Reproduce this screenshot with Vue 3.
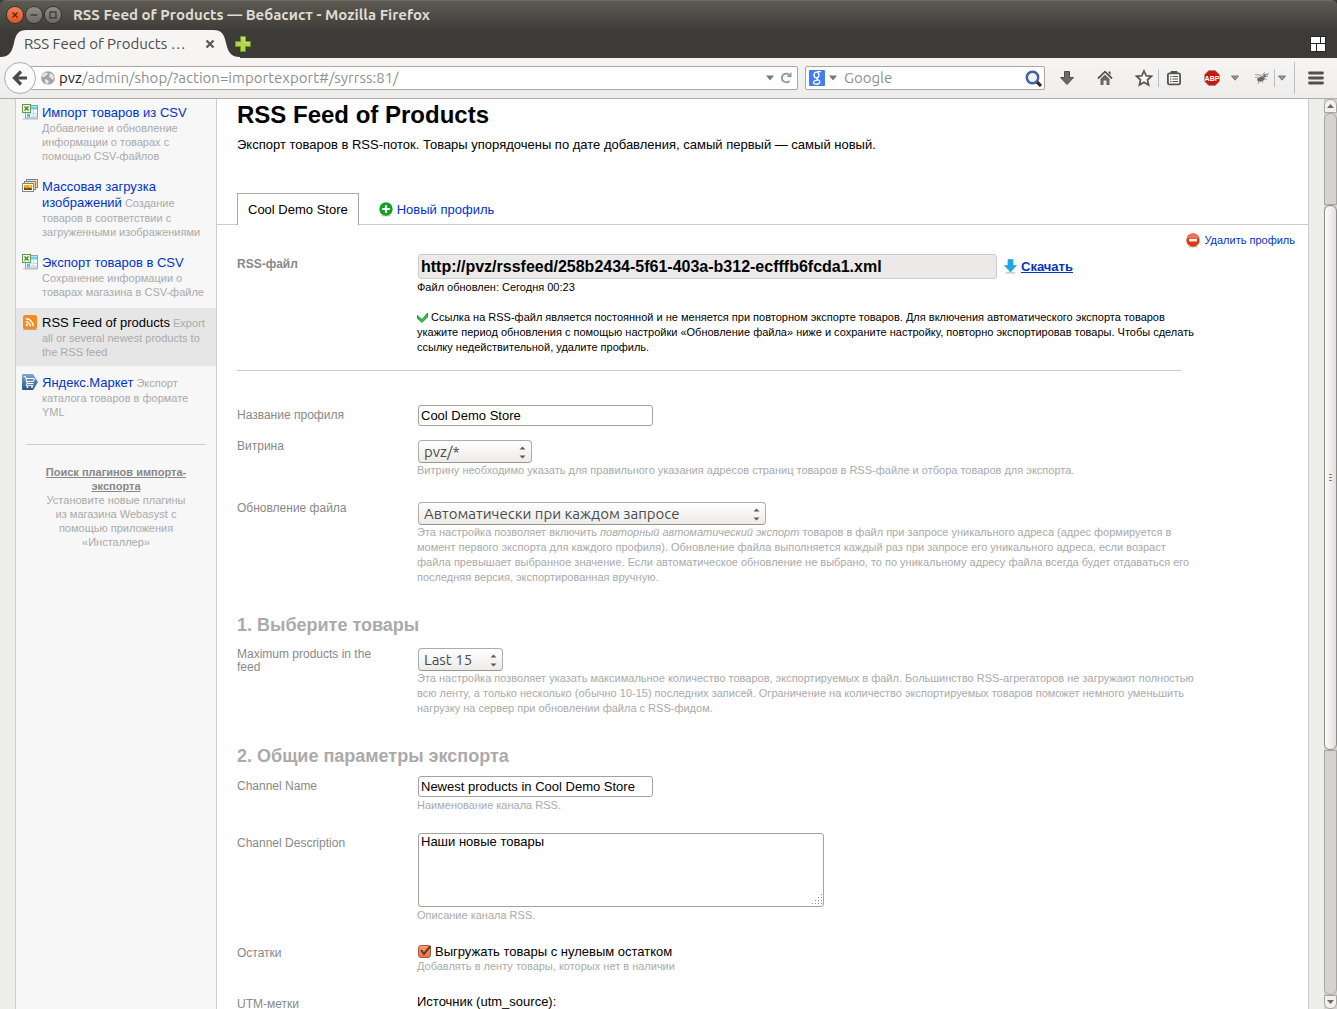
<script setup>
import { ref } from 'vue'

const plugins = [
  { icon: 'csv', title: 'Импорт товаров из CSV', hint: 'Добавление и обновление информации о товарах с помощью CSV-файлов' },
  { icon: 'images', title: 'Массовая загрузка изображений', hint: 'Создание товаров в соответствии с загруженными изображениями' },
  { icon: 'csv', title: 'Экспорт товаров в CSV', hint: 'Сохранение информации о товарах магазина в CSV-файле' },
  { icon: 'rss', title: 'RSS Feed of products', hint: 'Export all or several newest products to the RSS feed', selected: true },
  { icon: 'cart', title: 'Яндекс.Маркет', hint: 'Экспорт каталога товаров в формате YML' },
]

const address = ref('')
const search = ref('')
const feedUrl = ref('http://pvz/rssfeed/258b2434-5f61-403a-b312-ecfffb6fcda1.xml')
const profileName = ref('Cool Demo Store')
const channelName = ref('Newest products in Cool Demo Store')
const channelDescription = ref('Наши новые товары')
const exportZeroStock = ref(true)
</script>

<template>
  <div class="window">
    <header class="titlebar">
      <button class="win-btn close" aria-label="Close">
        <svg width="16" height="16" viewBox="0 0 16 16"><path d="M5.500 5.500l5 5M10.500 5.500l-5 5" stroke="#5a2413" stroke-width="1.400" /></svg>
      </button>
      <button class="win-btn" aria-label="Minimize">
        <svg width="16" height="16" viewBox="0 0 16 16"><path d="M4.500 8h7" stroke="#393834" stroke-width="1.400" /></svg>
      </button>
      <button class="win-btn" aria-label="Maximize">
        <svg width="16" height="16" viewBox="0 0 16 16"><rect x="5" y="5" width="6" height="6" fill="none" stroke="#393834" stroke-width="1.300" /></svg>
      </button>
      <span class="win-title">RSS Feed of Products — Вебасист - Mozilla Firefox</span>
    </header>

    <div class="tabstrip">
      <div class="browser-tab">
        <svg class="tab-shape" width="240" height="29" viewBox="0 0 240 29">
          <path d="M0 29V28C10 28 12 22 14 14C16 5 18 1 27 1H213C222 1 224 5 226 14C228 22 230 28 240 28V29Z" fill="#f6f5f4" />
        </svg>
        <span class="tab-text">RSS Feed of Products …</span>
        <button class="bare tab-close" aria-label="Close tab">
          <svg width="10" height="10" viewBox="0 0 10 10"><path d="M1.500 1.500l7 7M8.500 1.500l-7 7" stroke="#5b5b58" stroke-width="2.400" /></svg>
        </button>
      </div>
      <button class="bare tab-new" aria-label="New tab">
        <svg width="16" height="16" viewBox="0 0 16 16"><path d="M5.500.5h5v5h5v5h-5v5h-5v-5h-5v-5h5z" fill="#b2d64a" stroke="#6f9a22" /><path d="M6.500 2h3v4.500H14" fill="none" stroke="#d8ee8e" /></svg>
      </button>
      <button class="bare tab-groups" aria-label="Tab groups">
        <svg width="16" height="16" viewBox="0 0 16 16" fill="#fff"><rect width="16" height="16" rx="1" fill="#24262b" /><path d="M1 1h9v6H1zM11 1h4v6h-4zM1 8h5v7H1zM7 8h8v7H7z" /></svg>
      </button>
    </div>

    <div class="toolbar">
      <button class="back" aria-label="Back">
        <svg width="16" height="16" viewBox="0 0 16 16"><path d="M9 1.500L2.500 8L9 14.500M3 8H15" fill="none" stroke="#4a4a48" stroke-width="3.200" /></svg>
      </button>
      <div class="urlbar">
        <svg width="14" height="14" viewBox="0 0 14 14"><circle cx="7" cy="7" r="6.800" fill="#a3a3a3" /><path d="M2 3l3-1.500 2 1-1.500 2L3 6 1 6zM9 2l3 2 1 3-2 2-1-2-2-1zM4 8l3 1 1 2-2 2.500L4 11z" fill="#e6e6e6" /></svg>
        <label class="url-text"><b>pvz</b>/admin/shop/?action=importexport#/syrrss:81/<input v-model="address" class="url-input" aria-label="Address"></label>
        <svg width="8" height="6" viewBox="0 0 8 6"><path d="M0 .5h8L4 5.500z" fill="#787878" /></svg>
        <button class="bare" aria-label="Reload">
          <svg width="12" height="12" viewBox="0 0 12 12"><path d="M9.300 9A4.300 4.300 0 1 1 9 2.700" fill="none" stroke="#8c9aa1" stroke-width="2" /><path d="M6.500 5H11.500V0z" fill="#8c9aa1" /></svg>
        </button>
      </div>
      <div class="searchbar">
        <svg width="16" height="16" viewBox="0 0 16 16"><rect width="16" height="16" rx="1" fill="#437cf3" /><ellipse cx="7.500" cy="5" rx="2.400" ry="2.900" fill="none" stroke="#fff" stroke-width="1.400" /><path d="M8 1.700H12M8.500 7.800C6 9 10.800 9.500 10.800 12C10.800 14.800 4.500 15 4.500 12.500C4.500 10.500 7 10 9 10.200" fill="none" stroke="#fff" stroke-width="1.300" /></svg>
        <svg width="8" height="6" viewBox="0 0 8 6"><path d="M0 .5h8L4 5.500z" fill="#787878" /></svg>
        <input v-model="search" class="search-input" placeholder="Google" aria-label="Search">
        <button class="bare" aria-label="Go">
          <svg width="17" height="17" viewBox="0 0 17 17"><path d="M11 11L16 16" stroke="#2f2f2f" stroke-width="3.200" /><circle cx="7.500" cy="7.500" r="5.700" fill="#eef2fb" stroke="#2c4a8e" stroke-width="2.400" /><circle cx="7.500" cy="7.500" r="5.700" fill="none" stroke="#7d9bd6" stroke-width=".6" /></svg>
        </button>
      </div>
      <nav class="tools">
        <button class="bare" aria-label="Downloads">
          <svg width="16" height="16" viewBox="0 0 16 16"><path d="M5.500 1.500h5v6h4L8 14.500 1.500 7.500h4z" fill="#6a6a68" stroke="#4c4c4a" /></svg>
        </button>
        <button class="bare" aria-label="Home">
          <svg width="16" height="16" viewBox="0 0 16 16"><path d="M1 8.500L8 1.700L15 8.500" fill="none" stroke="#545452" stroke-width="1.800" /><path d="M3.500 9L8 4.500L12.500 9V15H9.500V10.500H6.500V15H3.500z" fill="#666664" /><path d="M11.500 1.500h2V5l-2-2z" fill="#545452" /></svg>
        </button>
        <button class="bare" aria-label="Bookmark">
          <svg width="18" height="18" viewBox="0 0 18 18"><path d="M9 2L11.200 6.800L16.300 7.300L12.500 10.800L13.600 16L9 13.300L4.400 16L5.500 10.800L1.700 7.300L6.800 6.800Z" fill="#fafafa" stroke="#545452" stroke-width="1.700" /></svg>
        </button>
        <i class="sep" />
        <button class="bare" aria-label="Bookmarks list">
          <svg width="16" height="16" viewBox="0 0 16 16"><path d="M5 3V1.500h6V3" fill="#545452" stroke="#545452" /><rect x="1.900" y="3.400" width="12.200" height="11" rx="1.500" fill="#fafafa" stroke="#545452" stroke-width="1.800" /><path d="M4 6.500h1.500M6.500 6.500H12M4 9h1.500M6.500 9H12M4 11.500h1.500M6.500 11.500H12" stroke="#545452" stroke-width="1.200" /></svg>
        </button>
        <button class="bare abp" aria-label="ABP">
          <svg width="16" height="16" viewBox="0 0 16 16"><path d="M4.800.5h6.400l4.300 4.300v6.400l-4.300 4.300H4.800L.5 11.200V4.800z" fill="#c9190b" stroke="#8d8d8d" stroke-width=".7" /><text x="8" y="10.800" text-anchor="middle" font-size="7" font-weight="700" fill="#fff">ABP</text></svg>
        </button>
        <svg class="caret" width="8" height="6" viewBox="0 0 8 6"><path d="M.5 1h7L4 5.200z" fill="#999" stroke="#777" /></svg>
        <button class="bare bug" aria-label="Firebug">
          <svg width="16" height="14" viewBox="0 0 16 14"><ellipse cx="7" cy="8" rx="4" ry="2.300" fill="#6a6a6a" transform="rotate(-20 7 8)" /><ellipse cx="11.500" cy="4.500" rx="2.500" ry="1.700" fill="#777" /><path d="M5 4L1 3.500M4 6L1 6.500M5 10L4 13M8 10l1 2M10 7l3 2M7 5l4-4M13 3l2-1M8 5L4 3.500" stroke="#999" stroke-width=".9" fill="none" /><circle cx="12.500" cy="4.500" r=".8" fill="#e8e8e8" /></svg>
        </button>
        <i class="sep" />
        <svg class="caret near" width="8" height="6" viewBox="0 0 8 6"><path d="M.5 1h7L4 5.200z" fill="#999" stroke="#777" /></svg>
        <i class="sep tall" />
        <button class="bare" aria-label="Menu">
          <svg width="16" height="14" viewBox="0 0 16 14"><path d="M1.500 2h13M1.500 7h13M1.500 12h13" stroke="#50504e" stroke-width="2.800" stroke-linecap="round" /></svg>
        </button>
      </nav>
    </div>

    <div class="viewport">
      <div class="page">
        <aside class="sidebar">
          <ul>
            <li v-for="p in plugins" :key="p.title" :class="{ selected: p.selected }">
              <svg v-if="p.icon === 'csv'" width="16" height="16" viewBox="0 0 16 16">
                <rect x="3.500" y="1.500" width="12" height="12.500" fill="#f4fafc" stroke="#8aa9b5" /><path d="M9 4h6" stroke="#6fcdf0" stroke-width="3" /><path d="M5 9.500h10M5 12h10M11.500 6v8" stroke="#c3dde5" /><path d="M5 10h3v3H5z" fill="#53c3ea" /><rect x=".5" y=".5" width="8" height="8" fill="#eef6e6" stroke="#5f9a48" /><path d="M2.500 2.500l4 4M6.500 2.500l-4 4" stroke="#4c8a34" stroke-width="1.500" /><path d="M1 15h15" stroke="#b9b9b9" />
              </svg>
              <svg v-else-if="p.icon === 'images'" width="16" height="16" viewBox="0 0 16 16">
                <rect x="4.500" y="1.500" width="11" height="8" fill="#fff" stroke="#789" /><path d="M6 3h8v5" fill="none" stroke="#e8b53a" stroke-width="1.200" /><rect x="2.500" y="3.500" width="11" height="8" fill="#fff" stroke="#789" /><path d="M4 5h8v5" fill="none" stroke="#e8b53a" stroke-width="1.200" /><rect x=".5" y="5.500" width="11" height="8" fill="#fff" stroke="#789" /><path d="M2 7h8v5H2z" fill="#f6a90b" /><path d="M2 9.500l3 .8 2-.8 3 1V12H2z" fill="#744a10" /><circle cx="8" cy="8.500" r="1" fill="#ffeb7a" />
              </svg>
              <svg v-else-if="p.icon === 'rss'" width="16" height="16" viewBox="0 0 16 16">
                <path d="M1 15.500h14" stroke="#aaa" /><rect x="1" y="1" width="14" height="14" rx="2" fill="#f8891b" /><circle cx="4.900" cy="11" r="1.200" fill="#fff" /><path d="M3.800 7.700a4.500 4.500 0 0 1 4.500 4.500M3.800 4.800a7.400 7.400 0 0 1 7.400 7.400" fill="none" stroke="#fff" stroke-width="1.600" />
              </svg>
              <svg v-else width="16" height="16" viewBox="0 0 16 16">
                <defs><linearGradient id="cart-bg" x2="0" y2="1"><stop stop-color="#7fa7cf" /><stop offset="1" stop-color="#2c5488" /></linearGradient></defs>
                <path d="M1 0h10l5 8-5 8H1a1 1 0 0 1-1-1V1a1 1 0 0 1 1-1z" fill="url(#cart-bg)" /><path d="M1.500 2.500h2L5 9.500h6.500M4 4.500h8.500l-1 3H5M5 9.500l-1 1.800h7.500" fill="none" stroke="#fff" /><circle cx="5.500" cy="13" r="1" fill="#fff" /><circle cx="10" cy="13" r="1" fill="#fff" />
              </svg>
              <p><a href="#">{{ p.title }}</a> <span class="hint">{{ p.hint }}</span></p>
            </li>
          </ul>
          <hr>
          <p class="more"><a href="#">Поиск плагинов импорта-экспорта</a><br>Установите новые плагины из магазина Webasyst с помощью приложения «Инсталлер»</p>
        </aside>

        <main class="content">
          <h1>RSS Feed of Products</h1>
          <p class="lead">Экспорт товаров в RSS-поток. Товары упорядочены по дате добавления, самый первый — самый новый.</p>

          <nav class="tabs">
            <a href="#" class="tab">Cool Demo Store</a>
            <a href="#" class="new-profile">
              <svg width="14" height="15" viewBox="0 0 14 15"><ellipse cx="7" cy="13.500" rx="5" ry="1" fill="#ccc" /><circle cx="7" cy="7" r="6.700" fill="#12a123" /><path d="M7 3.200v7.600M3.200 7h7.600" stroke="#fff" stroke-width="2.200" /></svg>
              Новый профиль
            </a>
          </nav>

          <div class="delete-line">
            <a href="#" class="delete">
              <svg width="14" height="15" viewBox="0 0 14 15"><ellipse cx="7" cy="13.500" rx="5" ry="1" fill="#ccc" /><circle cx="7" cy="7" r="6.700" fill="#de3a12" /><path d="M1 5.500a6.200 6.200 0 0 1 12 0z" fill="#f0745a" /><path d="M3 7.200h8" stroke="#fff" stroke-width="2.400" /></svg>
              Удалить профиль
            </a>
          </div>

          <form class="form" @submit.prevent>
            <div class="row first">
              <label for="feed" class="low strong">RSS-файл</label>
              <div class="value">
                <div class="feed-line">
                  <input id="feed" v-model="feedUrl" class="feed" readonly>
                  <a href="#" class="download">
                    <svg width="13" height="15" viewBox="0 0 13 15"><ellipse cx="6.500" cy="13.800" rx="5" ry="1" fill="#ccc" /><path d="M4 .5h5v6h3.500L6.500 13 .5 6.500H4z" fill="#1fa8e8" stroke="#3b9bd0" stroke-width=".7" /></svg>
                    <span>Скачать</span>
                  </a>
                </div>
                <p class="note">Файл обновлен: Сегодня 00:23</p>
                <p class="note permanent">
                  <svg width="11" height="11" viewBox="0 0 11 11"><path d="M.5 3.500L5 7.500L10.500 1V5L5 10.500L.5 6.500z" fill="#3fbf4f" stroke="#1a7d2b" stroke-width=".8" /></svg>
                  Ссылка на RSS-файл является постоянной и не меняется при повторном экспорте товаров. Для включения автоматического экспорта товаров укажите период обновления с помощью настройки «Обновление файла» ниже и сохраните настройку, повторно экспортировав товары. Чтобы сделать ссылку недействительной, удалите профиль.
                </p>
              </div>
            </div>
            <hr>

            <div class="row">
              <label for="name" class="low">Название профиля</label>
              <div class="value"><input id="name" v-model="profileName" class="text"></div>
            </div>
            <div class="row close-row">
              <label for="storefront">Витрина</label>
              <div class="value">
                <span class="select w-small"><select id="storefront"><option>pvz/*</option></select><svg width="7" height="13" viewBox="0 0 7 13"><path d="M.5 3.500L3.500 .5 6.500 3.500zM.5 9.500h6L3.500 12.500z" fill="#5b5b58" /></svg></span>
                <p class="hint">Витрину необходимо указать для правильного указания адресов страниц товаров в RSS-файле и отбора товаров для экспорта.</p>
              </div>
            </div>
            <div class="row wide-gap">
              <label for="update">Обновление файла</label>
              <div class="value">
                <span class="select w-large"><select id="update"><option>Автоматически при каждом запросе</option></select><svg width="7" height="13" viewBox="0 0 7 13"><path d="M.5 3.500L3.500 .5 6.500 3.500zM.5 9.500h6L3.500 12.500z" fill="#5b5b58" /></svg></span>
                <p class="hint">Эта настройка позволяет включить <i>повторный автоматический экспорт</i> товаров в файл при запросе уникального адреса (адрес формируется в момент первого экспорта для каждого профиля). Обновление файла выполняется каждый раз при запросе его уникального адреса, если возраст файла превышает выбранное значение. Если автоматическое обновление не выбрано, то по уникальному адресу файла всегда будет отдаваться его последняя версия, экспортированная вручную.</p>
              </div>
            </div>

            <h2>1. Выберите товары</h2>
            <div class="row close-row">
              <label for="max">Maximum products in the feed</label>
              <div class="value">
                <span class="select w-tiny"><select id="max"><option>Last 15</option></select><svg width="7" height="13" viewBox="0 0 7 13"><path d="M.5 3.500L3.500 .5 6.500 3.500zM.5 9.500h6L3.500 12.500z" fill="#5b5b58" /></svg></span>
                <p class="hint">Эта настройка позволяет указать максимальное количество товаров, экспортируемых в файл. Большинство RSS-агрегаторов не загружают полностью всю ленту, а только несколько (обычно 10-15) последних записей. Ограничение на количество экспортируемых товаров поможет немного уменьшить нагрузку на сервер при обновлении файла с RSS-фидом.</p>
              </div>
            </div>

            <h2>2. Общие параметры экспорта</h2>
            <div class="row tight-row">
              <label for="channel" class="low">Channel Name</label>
              <div class="value">
                <input id="channel" v-model="channelName" class="text">
                <p class="hint">Наименование канала RSS.</p>
              </div>
            </div>
            <div class="row gap">
              <label for="description" class="low">Channel Description</label>
              <div class="value">
                <span class="area">
                  <textarea id="description" v-model="channelDescription" />
                  <svg width="11" height="11" viewBox="0 0 11 11"><path d="M9 .5h1M6 3.500h1M9 3.500h1M3 6.500h1M6 6.500h1M9 6.500h1M0 9.500h1M3 9.500h1M6 9.500h1M9 9.500h1" stroke="#8f8f8b" /></svg>
                </span>
                <p class="hint">Описание канала RSS.</p>
              </div>
            </div>
            <div class="row gap">
              <span class="label low">Остатки</span>
              <div class="value">
                <label class="check">
                  <input v-model="exportZeroStock" type="checkbox">
                  <svg v-if="exportZeroStock" width="14" height="13" viewBox="0 0 14 13"><path d="M3 6l3 4L12.500 2" fill="none" stroke="#5f3a2c" stroke-width="2" /></svg>
                  Выгружать товары с нулевым остатком
                </label>
                <p class="hint">Добавлять в ленту товары, которых нет в наличии</p>
              </div>
            </div>
            <div class="row gap">
              <span class="label low">UTM-метки</span>
              <div class="value"><p class="line">Источник (utm_source):</p></div>
            </div>
          </form>
        </main>
      </div>

      <div class="scrollbar">
        <i class="arrow"><svg width="7" height="4" viewBox="0 0 7 4"><path d="M0 4h7L3.500 0z" fill="#6b6b68" /></svg></i>
        <i class="before" />
        <i class="thumb"><b /><b /><b /></i>
        <i class="after" />
        <i class="arrow"><svg width="7" height="4" viewBox="0 0 7 4"><path d="M0 0h7L3.500 4z" fill="#6b6b68" /></svg></i>
      </div>
    </div>
  </div>
</template>

<style>
html,
body {
  margin: 0;
  overflow: hidden;
}
</style>

<style scoped>
* {
  box-sizing: border-box;
}
svg {
  display: block;
  flex: none;
}
p,
h1,
h2,
ul {
  margin: 0;
  padding: 0;
}
a {
  color: #03c;
  text-decoration: none;
}
.window {
  display: flex;
  flex-direction: column;
  height: 100vh;
  overflow: hidden;
  background: #3c3b37;
  font-family: "Liberation Sans", Arial, sans-serif;
  font-size: 13px;
  line-height: 15px;
}
.bare {
  flex: none;
  padding: 0;
  border: 0;
  background: none;
}

/* browser chrome */
.titlebar {
  display: flex;
  flex: none;
  align-items: center;
  gap: 3px;
  height: 29px;
  padding-left: 7px;
  background: linear-gradient(#5c5a52, #3f3e3a);
  border-top: 1px solid #6d6b63;
  border-radius: 6px 6px 0 0;
}
.win-btn {
  width: 16px;
  height: 16px;
  padding: 0;
  border: 0;
  border-radius: 50%;
  background: linear-gradient(#8f8d85, #6c6a63);
  box-shadow: 0 0 0 1px #33322e;
}
.win-btn.close {
  background: linear-gradient(#f5815b, #e2511d);
}
.win-title {
  margin-left: 9px;
  color: #dfdbd2;
  font: 700 15px/20px Ubuntu, "Open Sans", sans-serif;
  white-space: nowrap;
}
.tabstrip {
  display: flex;
  flex: none;
  align-items: center;
  height: 29px;
  padding-right: 11px;
  background: #3c3b37;
}
.browser-tab {
  position: relative;
  display: flex;
  align-items: center;
  width: 235px;
  height: 29px;
  padding: 0 20px 0 24px;
}
.tab-shape {
  position: absolute;
  left: 0;
  top: 0;
}
.tab-text {
  position: relative;
  flex: 1;
  color: #4c4c4c;
  font: 15px/20px Ubuntu, "Open Sans", sans-serif;
  white-space: nowrap;
}
.tab-close {
  position: relative;
}
.tab-groups {
  margin-left: auto;
}
.toolbar {
  position: relative;
  z-index: 1;
  display: flex;
  flex: none;
  align-items: center;
  height: 40px;
  padding: 0 13px 0 4px;
  background: linear-gradient(#f6f5f4, #eeedeb);
  box-shadow: 0 1px #b0aca6;
  font: 15px/20px Ubuntu, "Open Sans", sans-serif;
}
.back {
  position: relative;
  z-index: 1;
  display: flex;
  align-items: center;
  justify-content: center;
  width: 32px;
  height: 32px;
  padding: 0;
  border: 1px solid #a5adb4;
  border-radius: 50%;
  background: #fafafa;
}
.urlbar,
.searchbar {
  display: flex;
  align-items: center;
  height: 24px;
  border: 1px solid #aaa7a2;
  border-radius: 2px;
  background: #fff;
}
.urlbar {
  flex: 1;
  gap: 6px;
  margin-left: -6px;
  padding: 0 5px 0 10px;
}
.url-text {
  display: flex;
  flex: 1;
  color: #8f8f8f;
  margin-left: -2px;
}
.url-text b {
  color: #222;
  font-weight: 400;
}
.url-input,
.search-input {
  flex: 1;
  min-width: 0;
  padding: 0;
  border: 0;
  outline: 0;
  background: none;
  font: inherit;
}
.search-input::placeholder {
  color: #8f8f8f;
}
.searchbar {
  gap: 4px;
  width: 240px;
  margin-left: 7px;
  padding: 0 2px 0 3px;
}
.search-input {
  margin-left: 3px;
}
.tools {
  display: flex;
  align-items: center;
  padding-left: 14px;
}
.tools .bare + .bare {
  margin-left: 22px;
}
.sep {
  width: 1px;
  height: 18px;
  margin: 0 7px 0 5px;
  background: #b9c1c7;
}
.abp text {
  font-family: "Liberation Sans", sans-serif;
}
.caret {
  margin-left: 11px;
}
.bug {
  margin-left: 15px;
}
.bug + .sep {
  margin: 0 3px 0 4px;
}
.caret.near {
  margin-left: 0;
}
.sep.tall {
  height: 32px;
  margin: 0 13px 0 8px;
}

/* page */
.viewport {
  display: flex;
  flex: 1;
  min-height: 0;
  background: #ededec;
}
.page {
  display: flex;
  flex: 1;
  min-width: 0;
  margin: 0 15px;
  overflow: hidden;
  border: solid #ccc;
  border-width: 0 1px;
  background: #fff;
}
.sidebar {
  flex: none;
  width: 201px;
  border-right: 1px solid #ccc;
  background: #f7f7f7;
  font-size: 11px;
  line-height: 14px;
}
.sidebar ul {
  list-style: none;
}
.sidebar li {
  display: flex;
  gap: 4px;
  margin-bottom: 2px;
  padding: 6px 4px 7px 6px;
}
.sidebar li p {
  padding-top: 1px;
}
.sidebar li.selected {
  background: #e6e6e6;
}
.sidebar li a {
  font-size: 13px;
  line-height: 16px;
}
.selected a {
  color: #000;
}
.hint {
  color: #aaa;
  font-size: 11px;
}
.sidebar hr {
  margin: 18px 10px 20px;
}
hr {
  height: 1px;
  border: 0;
  background: #ccc;
}
.more {
  padding: 0 27px;
  color: #aaa;
  text-align: center;
}
.more a {
  color: #888;
  font-weight: 700;
  text-decoration: underline;
}
.content {
  flex: 1;
  min-width: 0;
}
h1 {
  margin: 3px 20px 0;
  font-size: 24px;
  line-height: 28px;
}
.lead {
  margin: 8px 20px 0;
}
.tabs {
  display: flex;
  height: 32px;
  margin-top: 41px;
  padding-left: 20px;
  box-shadow: inset 0 -1px #ccc;
}
.tab {
  height: 32px;
  padding: 8px 10px 0;
  border: solid #aaa;
  border-width: 1px 1px 0;
  background: #fff;
  color: #000;
}
.new-profile {
  display: flex;
  align-items: center;
  gap: 4px;
  padding-left: 20px;
}
.delete-line {
  display: flex;
  justify-content: flex-end;
  padding: 8px 13px 0 0;
  font-size: 11px;
}
.delete {
  display: flex;
  gap: 4px;
}
.form {
  margin: 0 127px 0 20px;
}
.row {
  display: flex;
}
.first {
  padding-top: 6px;
}
.form hr {
  margin: 15px 0 34px;
}
.close-row {
  margin-top: 13px;
}
.tight-row {
  margin-top: 10px;
}
.gap {
  margin-top: 20px;
}
.wide-gap {
  margin-top: 24px;
}
.row > label,
.label {
  flex: none;
  width: 180px;
  padding-right: 30px;
  color: #888;
  font-size: 12px;
  line-height: 13px;
}
.row > .low {
  padding-top: 4px;
}
.strong {
  font-weight: 700;
}
.value {
  flex: 1;
  min-width: 0;
  margin-right: -16px;
}
.feed-line {
  display: flex;
  align-items: center;
  gap: 7px;
  margin: 0 0 1px 1px;
}
.feed {
  flex: none;
  width: 579px;
  height: 25px;
  padding: 0 2px;
  border: 1px solid #ccc;
  border-radius: 3px;
  background: #ebeae9;
  font: 700 16px/18px "Liberation Sans", Arial, sans-serif;
}
.download {
  display: flex;
  gap: 4px;
  font-weight: 700;
  text-decoration: underline;
}
.note {
  font-size: 11px;
}
.permanent {
  margin-top: 15px;
}
.permanent svg {
  display: inline-block;
  vertical-align: -2px;
}
.text {
  display: block;
  width: 235px;
  height: 21px;
  margin: 0 0 1px 1px;
}
.text,
textarea {
  padding: 0 2px;
  border: 1px solid #a5a29d;
  border-radius: 3px;
  background: #fff;
  color: #000;
  font: 13px/15px "Liberation Sans", Arial, sans-serif;
}
.select {
  position: relative;
  display: block;
  height: 23px;
  margin-left: 1px;
}
.select svg {
  position: absolute;
  top: 6px;
  right: 6px;
  pointer-events: none;
}
.w-tiny {
  width: 85px;
}
.w-small {
  width: 114px;
}
.w-large {
  width: 348px;
}
select {
  width: 100%;
  height: 23px;
  padding: 0 5px;
  border: 1px solid #b0ada8;
  border-bottom-color: #98958f;
  border-radius: 4px;
  background: linear-gradient(#fff, #ecebe9);
  color: #4c4c4c;
  font: 15px/20px Ubuntu, "Open Sans", sans-serif;
  appearance: none;
}
h2 {
  margin-top: 30px;
  color: #aaa;
  font-size: 18px;
  line-height: 20px;
}
.area {
  position: relative;
  display: block;
  width: 406px;
  height: 74px;
  margin: 0 0 1px 1px;
}
.area svg {
  position: absolute;
  right: 1px;
  bottom: 2px;
  pointer-events: none;
}
textarea {
  display: block;
  width: 100%;
  height: 74px;
  resize: none;
}
.check {
  position: relative;
  display: flex;
  align-items: center;
  gap: 4px;
  height: 16px;
}
.check input {
  width: 13px;
  height: 13px;
  margin: 0 0 0 1px;
  border: 1px solid #a5583a;
  border-radius: 3px;
  background: linear-gradient(#f79a76, #ee7446);
  appearance: none;
}
.check svg {
  position: absolute;
  left: 1px;
  top: 1px;
}

/* scrollbar */
.scrollbar {
  display: flex;
  flex: none;
  flex-direction: column;
  width: 13px;
  padding-top: 1px;
  background: #d4d3d1;
}
.scrollbar i {
  border: 1px solid #a9a6a1;
}
.arrow {
  display: flex;
  align-items: center;
  justify-content: center;
  height: 14px;
  background: #f2f1f0;
}
.arrow:first-child {
  border-radius: 6px 6px 0 0;
}
.arrow:last-child {
  border-radius: 0 0 6px 6px;
}
.before {
  flex: 91;
  border-radius: 6px 6px 0 0;
}
.after {
  flex: 244;
  border-radius: 0 0 6px 6px;
}
.scrollbar .thumb {
  display: flex;
  flex: 546;
  flex-direction: column;
  align-items: center;
  justify-content: center;
  gap: 2px;
  border-color: #8f8c87;
  border-radius: 6px;
  background: linear-gradient(90deg, #fdfdfd, #e1e0de);
}
.thumb b {
  width: 3px;
  height: 1px;
  background: #85827d;
}
</style>
